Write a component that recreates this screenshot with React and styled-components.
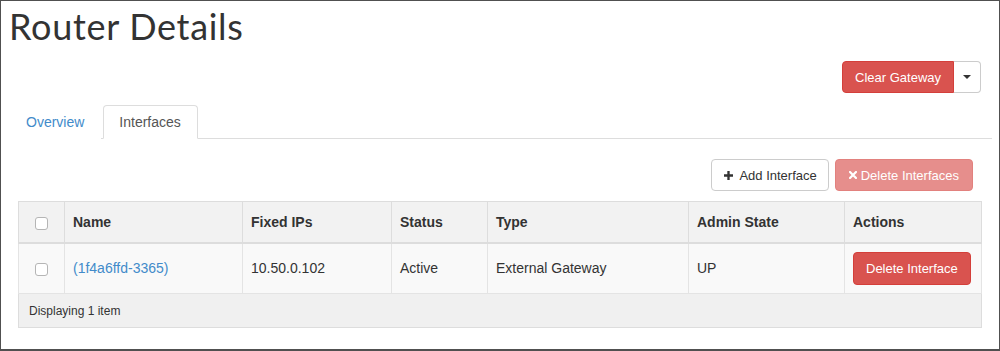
import React from "react";
import styled, { createGlobalStyle } from "styled-components";

const Global = createGlobalStyle`
  html, body { margin: 0; padding: 0; background: #fff; }
  * { box-sizing: border-box; }
  body { font-family: "Liberation Sans", Arial, sans-serif; color: #333; }
`;

const Frame = styled.div`
  width: 1000px;
  height: 351px;
  border: 1px solid #505050;
  border-bottom-width: 2px;
  padding: 0 7px;
  background: #fff;
  overflow: hidden;
`;

const Title = styled.h1`
  margin: 5px 0 0 1px;
  font-family: Lato, "Open Sans", sans-serif;
  font-weight: 400;
  font-size: 36px;
  letter-spacing: 0.7px;
  line-height: 40px;
  color: #333;
`;

const PageActions = styled.div`
  display: flex;
  justify-content: flex-end;
  margin-top: 15px;
  padding-right: 11px;
`;

const Btn = styled.button`
  display: inline-flex;
  align-items: center;
  justify-content: center;
  gap: ${(p) => p.$gap || 5}px;
  height: ${(p) => p.$h || 32}px;
  padding: 0 ${(p) => p.$pr || 12}px 0 ${(p) => p.$pl || 12}px;
  font-family: "Liberation Sans", Arial, sans-serif;
  font-size: 13px;
  border-radius: 4px;
  border: 1px solid ${(p) => (p.$variant === "danger" ? "#d43f3a" : "#ccc")};
  background: ${(p) => (p.$variant === "danger" ? "#d9534f" : "#fff")};
  color: ${(p) => (p.$variant === "danger" ? "#fff" : "#333")};
  opacity: ${(p) => (p.$disabled ? 0.65 : 1)};
  cursor: pointer;
`;

const Group = styled.div`
  display: flex;
  & > ${Btn}:first-child { border-top-right-radius: 0; border-bottom-right-radius: 0; }
  & > ${Btn}:last-child { border-top-left-radius: 0; border-bottom-left-radius: 0; border-left: 0; }
`;

const Caret = styled.span`
  width: 0;
  height: 0;
  border-left: 4px solid transparent;
  border-right: 4px solid transparent;
  border-top: 4px solid #333;
`;

const Tabs = styled.ul`
  display: flex;
  list-style: none;
  margin: 12px 0 0;
  padding: 0;
  border-bottom: 1px solid #ddd;
`;

const Tab = styled.li`
  margin-right: 2px;
  margin-bottom: -1px;
  padding: 6px 16px 6px ${(p) => (p.$active ? 15 : 17)}px;
  height: 34px;
  font-size: 14px;
  line-height: 20px;
  border: 1px solid ${(p) => (p.$active ? "#ddd" : "transparent")};
  border-bottom-color: ${(p) => (p.$active ? "#fff" : "transparent")};
  border-radius: 4px 4px 0 0;
  background: #fff;
  color: ${(p) => (p.$active ? "#555" : "#428bca")};
`;

const TabBody = styled.div`
  padding: 0 11px 0 10px;
`;

const TableActions = styled.div`
  display: flex;
  justify-content: flex-end;
  gap: 6px;
  margin-top: 20px;
  margin-right: 8px;
`;

const Table = styled.table`
  margin-top: 10px;
  width: 963px;
  border-collapse: collapse;
  border: 1px solid #ddd;
  table-layout: fixed;
  font-size: 14px;
`;

const Th = styled.th`
  height: 41px;
  padding: 0 8px;
  font-size: 14px;
  font-weight: 700;
  background: #f2f2f2;
  border: 1px solid #ddd;
  border-bottom: 2px solid #ddd;
  color: #333;
  text-align: ${(p) => (p.$center ? "center" : "left")};
`;

const Td = styled.td`
  height: 51px;
  padding: 0 8px;
  background: #f9f9f9;
  border: 1px solid #e4e4e4;
  color: #333;
  text-align: ${(p) => (p.$center ? "center" : "left")};
`;

const FootTd = styled.td`
  height: 34px;
  padding: 0 10px;
  font-size: 12px;
  background: #f0f0f0;
  border: 1px solid #ddd;
  color: #333;
`;

const Check = styled.span`
  display: inline-block;
  vertical-align: middle;
  width: 13px;
  height: 13px;
  border: 1px solid #b5b5b5;
  border-radius: 3px;
  background: #fff;
`;

const Link = styled.a`
  color: #428bca;
  text-decoration: none;
  font-size: 14px;
`;

const PlusIcon = () => (
  <svg width="9" height="9" viewBox="0 0 10 10">
    <path d="M3.7 0h2.6v3.7H10v2.6H6.3V10H3.7V6.3H0V3.7h3.7z" fill="#333" />
  </svg>
);

const TimesIcon = () => (
  <svg width="8" height="8" viewBox="0 0 8 8">
    <path d="M1 1L7 7M7 1L1 7" stroke="#fff" strokeWidth="2.2" strokeLinecap="square" />
  </svg>
);

const cols = [46, 178, 149, 96, 201, 156, 137];

export default function App() {
  return (
    <>
      <Global />
      <Frame>
        <Title>Router Details</Title>
        <PageActions>
          <Group>
            <Btn $variant="danger">Clear Gateway</Btn>
            <Btn $pl={9} $pr={9}><Caret /></Btn>
          </Group>
        </PageActions>
        <Tabs>
          <Tab>Overview</Tab>
          <Tab $active>Interfaces</Tab>
        </Tabs>
        <TabBody>
          <TableActions>
            <Btn $pl={12} $pr={11} $gap={6}><PlusIcon />Add Interface</Btn>
            <Btn $variant="danger" $disabled $pl={13} $pr={13} $gap={4}><TimesIcon />Delete Interfaces</Btn>
          </TableActions>
          <Table>
            <colgroup>
              {cols.map((w, i) => (
                <col key={i} style={{ width: w }} />
              ))}
            </colgroup>
            <thead>
              <tr>
                <Th $center><Check /></Th>
                <Th>Name</Th>
                <Th>Fixed IPs</Th>
                <Th>Status</Th>
                <Th>Type</Th>
                <Th>Admin State</Th>
                <Th>Actions</Th>
              </tr>
            </thead>
            <tbody>
              <tr>
                <Td $center><Check /></Td>
                <Td><Link href="#">(1f4a6ffd-3365)</Link></Td>
                <Td>10.50.0.102</Td>
                <Td>Active</Td>
                <Td>External Gateway</Td>
                <Td>UP</Td>
                <Td><Btn $variant="danger" $h={33}>Delete Interface</Btn></Td>
              </tr>
            </tbody>
            <tfoot>
              <tr>
                <FootTd colSpan={7}>Displaying 1 item</FootTd>
              </tr>
            </tfoot>
          </Table>
        </TabBody>
      </Frame>
    </>
  );
}
